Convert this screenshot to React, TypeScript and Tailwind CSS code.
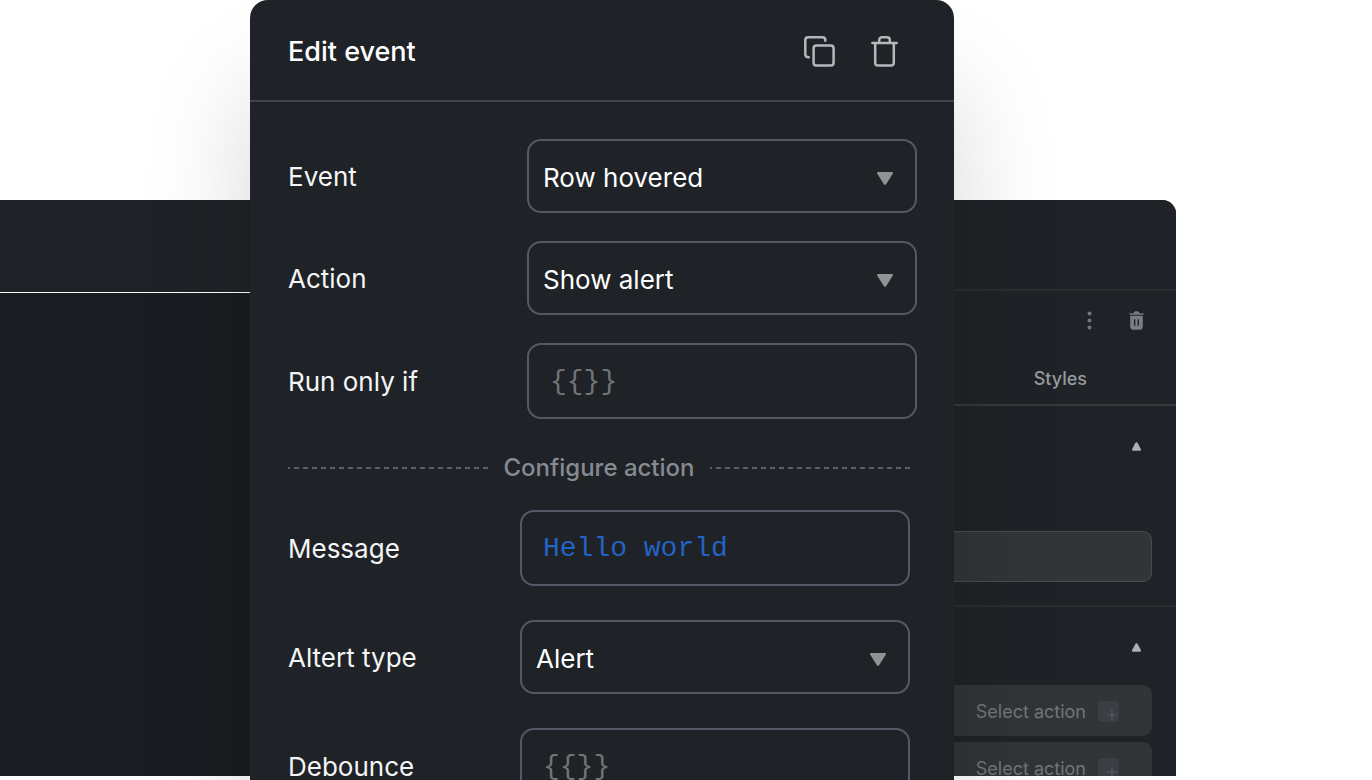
import { useState } from "react";

type SelectFieldProps = {
  id: string;
  label: string;
  options: string[];
};

type CodeFieldProps = {
  id: string;
  label: string;
  initial?: string;
};

const rowClass = "flex items-center justify-between";
const labelClass = "pt-0.5 text-[26px] leading-9 text-[#f4f5f6]";

function SelectField({ id, label, options }: SelectFieldProps) {
  const [value, setValue] = useState(options[0]);

  return (
    <div className={rowClass}>
      <label htmlFor={id} className={labelClass}>
        {label}
      </label>
      <div className="grid w-[390px] items-center">
        <select
          id={id}
          value={value}
          onChange={(e) => setValue(e.target.value)}
          className="col-start-1 row-start-1 h-[74px] w-full appearance-none rounded-[14px] border-2 border-[#515a65] bg-transparent px-3.5 pt-0.5 text-[26px] text-white"
        >
          {options.map((option) => (
            <option key={option}>{option}</option>
          ))}
        </select>
        <svg
          viewBox="0 0 16 13"
          className="pointer-events-none col-start-1 row-start-1 mt-1 mr-6 h-[13px] w-4 justify-self-end"
        >
          <path
            d="M1.2 0h13.6c1 0 1.5.8.9 1.7L9.1 12.2c-.5.8-1.7.8-2.2 0L.3 1.7C-.3.8.2 0 1.2 0z"
            fill="#8f9396"
          />
        </svg>
      </div>
    </div>
  );
}

function CodeField({ id, label, initial = "" }: CodeFieldProps) {
  const [value, setValue] = useState(initial);

  return (
    <div className={rowClass}>
      <label htmlFor={id} className={labelClass}>
        {label}
      </label>
      <input
        id={id}
        type="text"
        value={value}
        placeholder="{{}}"
        onChange={(e) => setValue(e.target.value)}
        className="h-[76px] w-[390px] rounded-[14px] border-2 border-[#515a65] bg-transparent px-[21px] font-['Liberation_Mono',monospace] text-[28px] text-[#2264c4] placeholder:text-[#6f7477]"
      />
    </div>
  );
}

function CopyIcon() {
  return (
    <svg viewBox="0 0 31 31" className="size-[31px]" fill="none" stroke="#b3b8bc" strokeWidth="2.5" strokeLinecap="round">
      <rect x="9.6" y="9.6" width="20" height="20" rx="2.8" />
      <path d="M4.8 21.3H4.2A2.8 2.8 0 0 1 1.3 18.5V4.1A2.8 2.8 0 0 1 4.1 1.3H18.5A2.8 2.8 0 0 1 21.3 4.1V4.8" />
    </svg>
  );
}

function TrashIcon() {
  return (
    <svg viewBox="0 0 27 31" className="h-[31px] w-[27px]" fill="none" stroke="#b3b8bc" strokeWidth="2.5" strokeLinecap="round">
      <path d="M1.3 7H25.7" />
      <path d="M4.2 7V26.8A2.8 2.8 0 0 0 7 29.6H20A2.8 2.8 0 0 0 22.8 26.8V7" />
      <path d="M8.2 6.8V4.1A2.8 2.8 0 0 1 11 1.3H16A2.8 2.8 0 0 1 18.8 4.1V6.8" />
    </svg>
  );
}

function DashedRule() {
  return (
    <div className="h-0.5 flex-1 bg-[repeating-linear-gradient(90deg,#5a6068_0_2px,transparent_2px_6px,#5a6068_6px_9px)]" />
  );
}

function EventDialog() {
  return (
    <div
      role="dialog"
      aria-labelledby="dialog-title"
      className="absolute top-0 left-[250px] min-h-[calc(100%+60px)] w-[704px] rounded-[18px] bg-[#1f2226] shadow-[0_90px_110px_0_rgba(0,0,0,0.16)]"
    >
      <header className="flex h-[102px] items-center justify-between border-b-2 border-[#3f444b] pt-0.5 pr-14 pl-[38px]">
        <h1 id="dialog-title" className="pt-0.5 text-[27px] leading-9 font-medium text-white">
          Edit event
        </h1>
        <div className="flex gap-9">
          <button type="button" aria-label="Duplicate event">
            <CopyIcon />
          </button>
          <button type="button" aria-label="Delete event">
            <TrashIcon />
          </button>
        </div>
      </header>

      <form>
        <div className="flex flex-col gap-7 pt-[37px] pr-[37px] pl-[38px]">
          <SelectField id="event" label="Event" options={["Row hovered", "Row clicked"]} />
          <SelectField id="action" label="Action" options={["Show alert", "Run query"]} />
          <CodeField id="run-only-if" label="Run only if" />
        </div>

        <div className="pr-11 pl-[38px]">
          <div className="flex items-center gap-[15px] pt-[31px] pb-6">
            <DashedRule />
            <h2 className="text-[24px] leading-9 font-medium text-[#858b92]">Configure action</h2>
            <DashedRule />
          </div>
          <div className="flex flex-col gap-[34px]">
            <CodeField id="message" label="Message" initial="Hello world" />
            <SelectField id="alert-type" label="Altert type" options={["Alert", "Success"]} />
            <CodeField id="debounce" label="Debounce" />
          </div>
        </div>
      </form>
    </div>
  );
}

function CollapseButton({ label }: { label: string }) {
  return (
    <button type="button" aria-label={label}>
      <svg viewBox="0 0 9 9" className="size-[9px]">
        <path d="M3.5 .8C4 .1 5 .1 5.5 .8L8.8 7C9.2 7.9 8.8 8.8 7.9 8.8H1.1C.2 8.8-.2 7.9 .2 7z" fill="#abb1b7" />
      </svg>
    </button>
  );
}

function SelectActionButton() {
  return (
    <button
      type="button"
      className="flex h-[51px] shrink-0 items-center justify-end gap-3 rounded-[9px] bg-[#323538] pt-0.5 pr-[33px] text-lg text-[#70757a]"
    >
      Select action
      <svg viewBox="0 0 21 21" className="size-[21px]">
        <rect width="21" height="21" rx="3" fill="#3b3e43" />
        <path d="M9 14H19M14 9V19" stroke="#585c62" strokeWidth="1.2" />
      </svg>
    </button>
  );
}

function Inspector() {
  return (
    <aside className="flex w-[300px] shrink-0 flex-col bg-[#1f2327]">
      <div className="h-[91px] shrink-0 border-b-2 border-[#2a2e31]" />
      <div className="flex h-[58px] shrink-0 items-center justify-end gap-[37px] pr-8">
        <button type="button" aria-label="More">
          <svg viewBox="0 0 5 19" className="h-[19px] w-[5px]" fill="#70767c">
            <circle cx="2.5" cy="2.5" r="2" />
            <circle cx="2.5" cy="9.5" r="2" />
            <circle cx="2.5" cy="16.5" r="2" />
          </svg>
        </button>
        <button type="button" aria-label="Delete component">
          <svg viewBox="0 0 15 19" className="h-[19px] w-[15px]">
            <path
              d="M.5 2.2H4.5C5 .8 5.8 .3 7.5 .3S10 .8 10.5 2.2H14.5V3.8H.5zM1.2 4.8H13.8V15.5C13.8 17.5 12.8 18.7 11 18.7H4C2.2 18.7 1.2 17.5 1.2 15.5z"
              fill="#787e84"
            />
            <path d="M5.7 8.3V14.8M9.3 8.3V14.8" stroke="#1f2327" strokeWidth="1.3" />
          </svg>
        </button>
      </div>
      <div className="flex h-[57px] shrink-0 items-center justify-end border-b-2 border-[#35393c] pt-1 pr-[89px]">
        <button type="button" className="text-lg font-medium text-[#979b9f]">
          Styles
        </button>
      </div>
      <section className="flex shrink-0 flex-col border-b-2 border-[#2a2e31] pr-6 pb-[23px]">
        <div className="flex h-[81px] items-center justify-end pr-[11px]">
          <CollapseButton label="Collapse data" />
        </div>
        <input
          type="text"
          aria-label="Table data"
          className="mt-11 h-[51px] rounded-[9px] border border-[#484c50] bg-[#323538] px-3 text-lg text-[#979b9f]"
        />
      </section>
      <section className="flex flex-col gap-1.5 pr-6">
        <div className="flex h-[72px] shrink-0 items-center justify-end pt-2 pr-[11px]">
          <CollapseButton label="Collapse events" />
        </div>
        <SelectActionButton />
        <SelectActionButton />
      </section>
    </aside>
  );
}

function App() {
  return (
    <main className="relative flex h-screen flex-col overflow-hidden bg-white font-['Inter','Noto_Sans',sans-serif]">
      <div className="mt-[200px] mr-[196px] mb-1 flex min-h-0 flex-1 overflow-hidden rounded-tr-[14px] bg-[#191c20]">
        <div className="flex-1">
          <div className="h-[93px] border-b border-white bg-[#1f2327]" />
        </div>
        <Inspector />
      </div>
      <EventDialog />
    </main>
  );
}

export default App;
